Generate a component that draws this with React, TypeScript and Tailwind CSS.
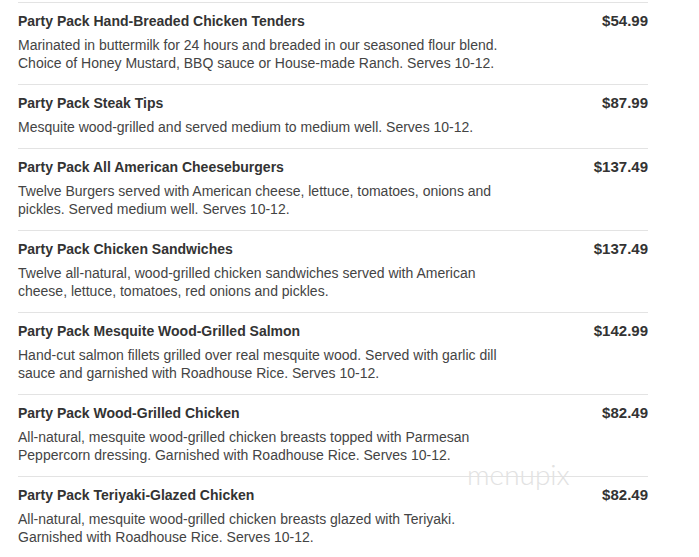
import React from 'react';

interface MenuItem {
  name: string;
  price: string;
  description: string;
}

const ITEMS: MenuItem[] = [
  {
    name: 'Party Pack Hand-Breaded Chicken Tenders',
    price: '$54.99',
    description:
      'Marinated in buttermilk for 24 hours and breaded in our seasoned flour blend. Choice of Honey Mustard, BBQ sauce or House-made Ranch. Serves 10-12.',
  },
  {
    name: 'Party Pack Steak Tips',
    price: '$87.99',
    description: 'Mesquite wood-grilled and served medium to medium well. Serves 10-12.',
  },
  {
    name: 'Party Pack All American Cheeseburgers',
    price: '$137.49',
    description:
      'Twelve Burgers served with American cheese, lettuce, tomatoes, onions and pickles. Served medium well. Serves 10-12.',
  },
  {
    name: 'Party Pack Chicken Sandwiches',
    price: '$137.49',
    description:
      'Twelve all-natural, wood-grilled chicken sandwiches served with American cheese, lettuce, tomatoes, red onions and pickles.',
  },
  {
    name: 'Party Pack Mesquite Wood-Grilled Salmon',
    price: '$142.99',
    description:
      'Hand-cut salmon fillets grilled over real mesquite wood. Served with garlic dill sauce and garnished with Roadhouse Rice. Serves 10-12.',
  },
  {
    name: 'Party Pack Wood-Grilled Chicken',
    price: '$82.49',
    description:
      'All-natural, mesquite wood-grilled chicken breasts topped with Parmesan Peppercorn dressing. Garnished with Roadhouse Rice. Serves 10-12.',
  },
  {
    name: 'Party Pack Teriyaki-Glazed Chicken',
    price: '$82.49',
    description:
      'All-natural, mesquite wood-grilled chicken breasts glazed with Teriyaki. Garnished with Roadhouse Rice. Serves 10-12.',
  },
];

export default function App() {
  return (
    <div className="relative w-[699px] h-[557px] overflow-hidden bg-white font-['Liberation_Sans',Arial,sans-serif]">
      <div className="pt-[2px] pl-[18px] w-[648px]">
        {ITEMS.map((item) => (
          <div key={item.name} className="border-t border-[#e3e3e3] pt-2 pb-3">
            <div className="flex justify-between items-center h-5">
              <h3 className="text-[14px] font-bold text-[#333]">{item.name}</h3>
              <span className="text-[15px] font-bold text-[#333]">{item.price}</span>
            </div>
            <p className="mt-[5px] w-[500px] text-[14px] leading-[18px] text-[#444]">{item.description}</p>
          </div>
        ))}
      </div>

      {/* watermark */}
      <div className="absolute left-[467px] top-[460px] text-[28px] font-light leading-none text-[#e2e2e2] font-['Lato',sans-serif] select-none">
        menupix
      </div>
    </div>
  );
}
